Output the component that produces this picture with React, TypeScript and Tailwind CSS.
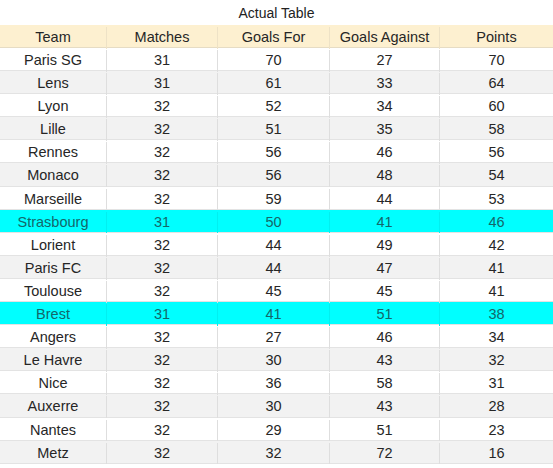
import React from 'react';

const rows: [string, number, number, number, number][] = [
  ['Paris SG', 31, 70, 27, 70],
  ['Lens', 31, 61, 33, 64],
  ['Lyon', 32, 52, 34, 60],
  ['Lille', 32, 51, 35, 58],
  ['Rennes', 32, 56, 46, 56],
  ['Monaco', 32, 56, 48, 54],
  ['Marseille', 32, 59, 44, 53],
  ['Strasbourg', 31, 50, 41, 46],
  ['Lorient', 32, 44, 49, 42],
  ['Paris FC', 32, 44, 47, 41],
  ['Toulouse', 32, 45, 45, 41],
  ['Brest', 31, 41, 51, 38],
  ['Angers', 32, 27, 46, 34],
  ['Le Havre', 32, 30, 43, 32],
  ['Nice', 32, 36, 58, 31],
  ['Auxerre', 32, 30, 43, 28],
  ['Nantes', 32, 29, 51, 23],
  ['Metz', 32, 32, 72, 16],
];

const highlighted = ['Strasbourg', 'Brest'];
const headers = ['Team', 'Matches', 'Goals For', 'Goals Against', 'Points'];
const cols = 'grid grid-cols-[107px_111px_112px_110px_113px]';

export default function App() {
  return (
    <div className="w-[553px] h-[468px] bg-white text-[14.5px] text-[#262626] overflow-hidden" style={{ fontFamily: '"Liberation Sans", Arial, sans-serif' }}>
      {/* title */}
      <div className="h-[25px] flex items-center justify-center pt-[1px] text-[14px] text-[#222]">Actual Table</div>

      {/* header */}
      <div className={`${cols} h-[23px] bg-[#fdf0d0] border-b border-[#e6dcc4] pt-[2px]`}>
        {headers.map((h, i) => (
          <div key={h} className={`flex items-center justify-center ${i < 4 ? 'border-r border-[#eee2c6]' : ''}`}>{h}</div>
        ))}
      </div>

      {/* body */}
      {rows.map((r, idx) => {
        const hl = highlighted.includes(r[0]);
        const bg = hl ? 'bg-[#00ffff] text-[#14676a]' : idx % 2 === 1 ? 'bg-[#f2f2f2]' : 'bg-white';
        return (
          <div key={r[0]} className={`${cols} h-[23.1px] border-b border-[#e3e3e3] pt-[2px] ${bg}`}>
            {r.map((v, i) => (
              <div key={i} className={`flex items-center justify-center ${i < 4 ? (hl ? 'border-r border-[#00f0f0]' : 'border-r border-[#dedede]') : ''}`}>{v}</div>
            ))}
          </div>
        );
      })}
    </div>
  );
}
